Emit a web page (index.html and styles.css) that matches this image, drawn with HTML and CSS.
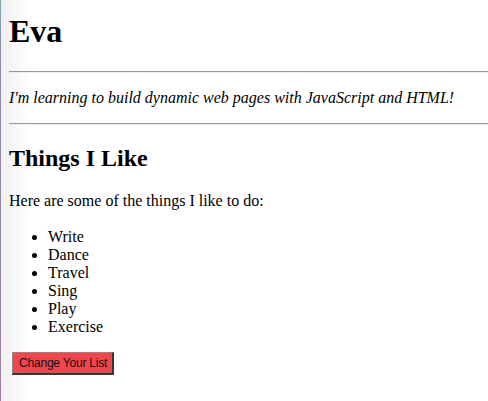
FILE: index.html
```html
<!DOCTYPE html>
<html>
<head>
<meta charset="utf-8">
<link rel="stylesheet" href="styles.css">
</head>
<body class="page">
<h1 class="name">Eva</h1>
<hr class="rule">
<p class="tagline"><em>I'm learning to build dynamic web pages with JavaScript and HTML!</em></p>
<hr class="rule">
<h2 class="section-title">Things I Like</h2>
<p class="intro">Here are some of the things I like to do:</p>
<ul class="likes">
<li>Write</li>
<li>Dance</li>
<li>Travel</li>
<li>Sing</li>
<li>Play</li>
<li>Exercise</li>
</ul>
<button class="change-btn" type="button">Change Your List</button>
</body>
</html>
```

FILE: styles.css
```css
html {
  min-height: 100%;
  background:
    linear-gradient(to bottom, #7fa9ad 0, #8f8aa8 60px, #9c7f9e 100%) left top / 1px 100% no-repeat,
    linear-gradient(to right, #efefef 0, #f6f6f6 12px, #ffffff 34px) left top / 40px 100% no-repeat,
    #fff;
}
.page {
  font-family: "Liberation Serif", "Times New Roman", serif;
  font-size: 16px;
  color: #000;
  margin: 0 0 8px 9px;
}
.name {
  font-size: 32px;
  margin: 13px 0 21px;
}
.rule {
  border: none;
  border-top: 1px solid #999;
  border-bottom: 1px solid #eee;
  margin: 8px 0;
}
.tagline {
  margin: 16px 0;
}
.section-title {
  font-size: 24px;
  margin: 20px 0;
}
.intro {
  margin: 16px 0;
}
.likes {
  margin: 18px 0 16px;
  padding-left: 39px;
}
.change-btn {
  font-family: "Liberation Sans", Arial, sans-serif;
  font-size: 12px;
  letter-spacing: -0.2px;
  line-height: 14px;
  background: #f0474f;
  color: #111;
  border: 2px outset #8a8a8a;
  border-top-width: 1px;
  border-left-width: 1px;
  padding: 3px 5px 3px 6px;
  margin-left: 3px;
}
```
